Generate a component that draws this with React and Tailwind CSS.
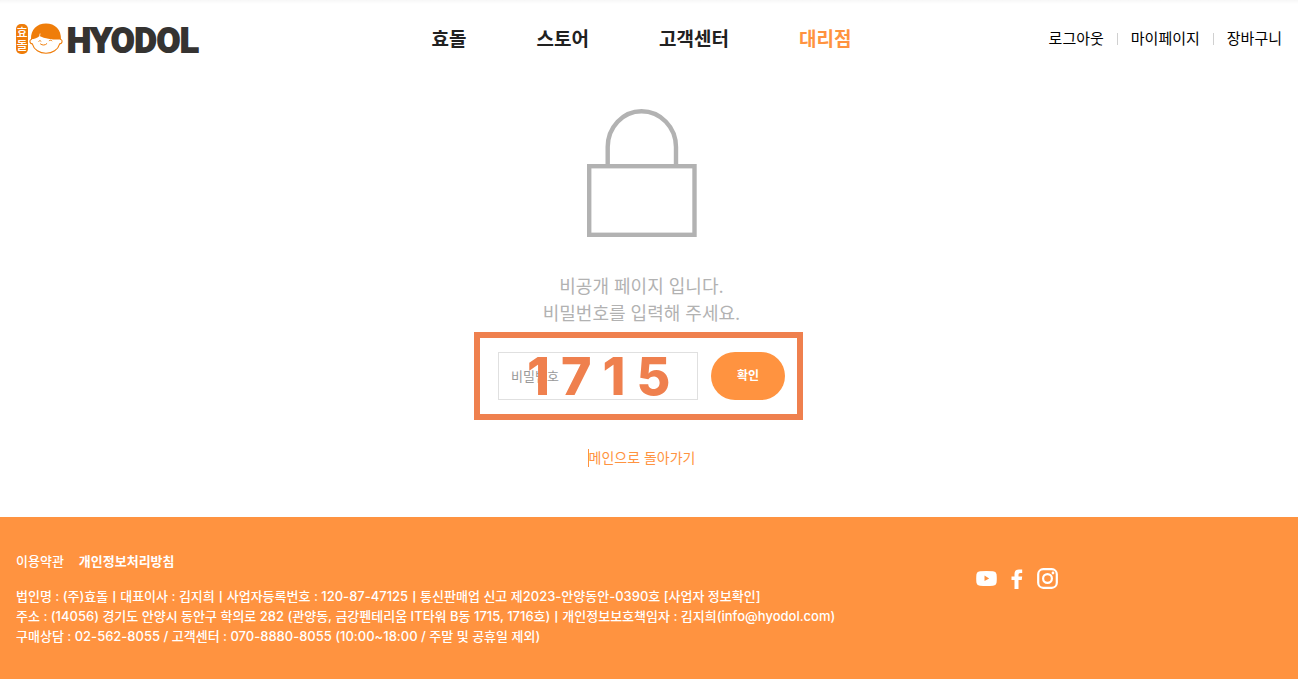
const menu = [
  { label: '효돌' },
  { label: '스토어' },
  { label: '고객센터' },
  { label: '대리점', active: true },
];

function Logo() {
  return (
    <a href="#" aria-label="HYODOL" className="flex h-8 items-center justify-self-start text-[#353331]">
      <span className="flex h-[30px] w-3 flex-col items-center justify-center rounded-[5px] bg-[#ef7d0a] text-[12px] leading-[13px] font-medium text-white">
        <span>효</span>
        <span>돌</span>
      </span>
      <svg viewBox="0 0 34 32" className="ml-px h-8 w-[34px]" fill="none" aria-hidden="true">
        <path d="M2.800 16.500C.3 16 .2 20.900 3.300 20.800C5 26.800 10.500 30.300 17 30.300S29 26.800 30.700 20.800C33.800 20.900 33.700 16 31.200 16.500" fill="#fff" stroke="#ef7d0a" strokeWidth="1.100" />
        <path d="M2 16.300C1.600 6.700 8 .6 17 .6s15.400 6.100 15 15.900c-8 .3-15.500-.8-21.500-3.600C8.600 14.700 5.600 16.200 2 16.300z" fill="#ef7d0a" />
        <path d="M10.500 13.300l.6-2.800" stroke="#fff" strokeWidth=".7" />
        <path d="M9.800 18.200c.7-.7 1.500-.7 2.200 0M20.200 17.700c.9-.7 1.900-.7 2.700.1M11.500 21c2 1.500 4.500 1.500 6.300-.3" stroke="#ef7d0a" strokeWidth="1" strokeLinecap="round" />
      </svg>
      <span className="ml-1 pt-[2px] font-[Roboto] text-[34px] leading-8 font-bold [-webkit-text-stroke:2px_#353331]">HYODOL</span>
    </a>
  );
}

function Header() {
  return (
    <header className="grid grid-cols-[1fr_auto_1fr] items-center bg-linear-to-b from-[#f7f7f7] to-white to-[4px] px-4 pt-[23px] pb-[22px]">
      <Logo />
      <nav className="mr-[15px] flex gap-[70px] pt-px text-[19px] leading-7 font-bold">
        {menu.map((item) => (
          <a key={item.label} href="#" className={item.active ? 'text-[#ff9340]' : 'text-[#212121]'}>
            {item.label}
          </a>
        ))}
      </nav>
      <div className="flex items-center gap-[13px] justify-self-end text-[15px] leading-6 text-black">
        <a href="#">로그아웃</a>
        <span className="h-3 w-px bg-[#d0d0d0]" />
        <a href="#">마이페이지</a>
        <span className="h-3 w-px bg-[#d0d0d0]" />
        <a href="#">장바구니</a>
      </div>
    </header>
  );
}

function PasswordForm() {
  return (
    <form className="relative mt-[25px] flex items-center gap-[13px]" onSubmit={(e) => e.preventDefault()}>
      <input
        type="password"
        aria-label="비밀번호"
        placeholder="비밀번호"
        className="h-12 w-[200px] border border-[#e0e0e0] bg-white px-3 text-[13px] text-[#212121] outline-none placeholder:text-[#999]"
      />
      <button type="submit" className="h-12 w-[74px] rounded-full bg-[#ff9340] text-[12px] font-bold text-white">
        확인
      </button>
      <div className="pointer-events-none absolute -top-5 -right-[18px] -bottom-5 -left-6 flex items-center gap-[11px] border-[6px] border-[#ef804e] pt-[2px] pl-[47px] font-[Inter] text-[52px] leading-none font-extrabold text-[#ef804e]">
        <span>1</span>
        <span>7</span>
        <span>1</span>
        <span>5</span>
      </div>
    </form>
  );
}

function Footer() {
  return (
    <footer className="grid grow grid-cols-[3fr_1fr] bg-[#ff9340] py-[34px] text-[13px] font-medium text-white">
      <div className="pl-4">
        <div className="flex gap-[15px] leading-5">
          <a href="#">이용약관</a>
          <a href="#" className="font-bold">개인정보처리방침</a>
        </div>
        <div className="mt-[15px] leading-5">
          <p>
            법인명 : (주)효돌ㅣ대표이사 : 김지희ㅣ사업자등록번호 : 120-87-47125ㅣ통신판매업 신고 제2023-안양동안-0390호 <a href="#">[사업자 정보확인]</a>
          </p>
          <p>주소 : (14056) 경기도 안양시 동안구 학의로 282 (관양동, 금강펜테리움 IT타워 B동 1715, 1716호)ㅣ개인정보보호책임자 : 김지희(info@hyodol.com)</p>
          <p>구매상담 : 02-562-8055 / 고객센터 : 070-8880-8055 (10:00~18:00 / 주말 및 공휴일 제외)</p>
        </div>
      </div>
      <div className="mt-[17px] flex items-center gap-[10px] self-start pl-[2px]">
        <a href="#" aria-label="YouTube">
          <svg viewBox="0 0 21 15" className="block h-[15px] w-[21px]" aria-hidden="true">
            <path fill="#fff" fillRule="evenodd" d="M4 .3Q10.500-.3 17 .3Q20 .5 20.500 3Q21.100 7.500 20.500 12Q20 14.500 17 14.700Q10.500 15.300 4 14.700Q1 14.500.5 12Q-.1 7.500.5 3Q1 .5 4 .3zM8.500 4.600v5.500l4.700-2.700z" />
          </svg>
        </a>
        <a href="#" aria-label="Facebook" className="px-1">
          <svg viewBox="0 0 12 20" className="block h-5 w-3" aria-hidden="true">
            <path fill="#fff" d="M3.500 20v-9H.5V7.400h3V5Q3.500.5 8 .5h3.200v3.400H9.100Q7.500 3.900 7.500 5.400v2h3.700L10.700 11H7.500v9z" />
          </svg>
        </a>
        <a href="#" aria-label="Instagram">
          <svg viewBox="0 0 21 21" className="block h-[21px] w-[21px]" fill="none" stroke="#fff" strokeWidth="2.200" aria-hidden="true">
            <rect x="1.200" y="1.200" width="18.600" height="18.600" rx="5" />
            <circle cx="10.500" cy="10.500" r="4.400" />
            <circle cx="16" cy="5" r="1.400" fill="#fff" stroke="none" />
          </svg>
        </a>
      </div>
    </footer>
  );
}

export default function App() {
  return (
    <div className="flex min-h-screen flex-col bg-white font-[Inter,'Noto_Sans_CJK_KR',sans-serif]">
      <Header />
      <main className="flex flex-col items-center pt-8 pr-[15px] pb-[50px]">
        <svg viewBox="0 0 110 128" className="h-32 w-[110px]" fill="none" stroke="#b2b2b2" strokeWidth="4.400" aria-hidden="true">
          <path d="M20.700 57V38A33.800 35.800 0 0 1 54.500 2.200A34.500 35.800 0 0 1 89 38v19" />
          <rect x="2.200" y="57.200" width="105.300" height="68.600" />
        </svg>
        <p className="mt-9 text-center text-[18px] leading-[27px] text-[#b2b2b2]">
          비공개 페이지 입니다.
          <br />
          비밀번호를 입력해 주세요.
        </p>
        <PasswordForm />
        <a href="#" className="mt-[49px] border-l border-[#ff9340] text-[14px] leading-[18px] text-[#ff9340]">
          메인으로 돌아가기
        </a>
      </main>
      <Footer />
    </div>
  );
}
